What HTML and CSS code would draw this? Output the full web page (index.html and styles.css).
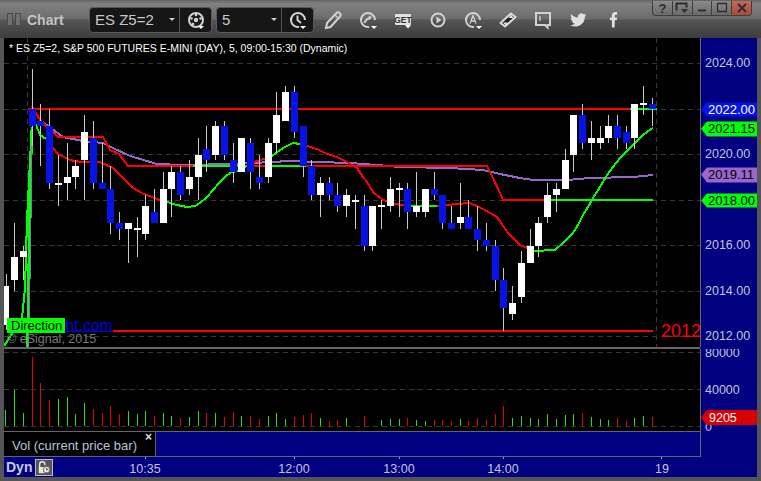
FILE: index.html
```html
<!DOCTYPE html>
<html lang="en">
<head>
<meta charset="utf-8">
<title>Chart</title>
<link rel="stylesheet" href="styles.css">
</head>
<body>
<div class="window">
  <header class="titlebar">
    <div class="handle"><i></i><i></i></div>
    <div class="title">Chart</div>
    <div class="combo combo-symbol">
      <span class="combo-text">ES Z5=2</span><span class="caret"></span>
      <span class="combo-btn">
        <svg class="ico" viewBox="0 0 24 24"><circle cx="12" cy="12" r="7" class="st2"/><circle cx="12" cy="12" r="2.200" class="fl"/><circle cx="12" cy="7" r="1.300" class="fl"/><circle cx="7.500" cy="10.500" r="1.300" class="fl"/><circle cx="16.500" cy="10.500" r="1.300" class="fl"/><circle cx="9" cy="16" r="1.300" class="fl"/><path d="M14 18h6l-3 3z" class="flw"/></svg>
      </span>
    </div>
    <div class="combo combo-interval">
      <span class="combo-text">5</span><span class="caret"></span>
      <span class="combo-btn">
        <svg class="ico" viewBox="0 0 24 24"><path d="M13 19A7 7 0 1 1 19 12" class="st2"/><path d="M11.500 7.500v4.500l3.500 3" class="st2"/><path d="M14 18h6l-3 3z" class="flw"/></svg>
      </span>
    </div>
    <div class="tools">
      <span class="tool"><svg class="ico" viewBox="0 0 24 24"><path d="M5 20l1-5L15.500 5a2 2 0 0 1 3 0l.5.500a2 2 0 0 1 0 3L9.500 19z" class="st2"/><path d="M14 7l3.500 3.500" class="st1"/></svg></span>
      <span class="tool"><svg class="ico" viewBox="0 0 24 24"><path d="M13 19A7 7 0 1 1 19 12" class="st2"/><path d="M8.500 15c.8-3 2.500-4 5-5" class="st2"/><path d="M12.500 7.500l3.500 1.500-2.500 3z" class="fl"/><path d="M15 18h6l-3 3z" class="flw"/></svg></span>
      <span class="tool"><svg class="ico" viewBox="0 0 24 24"><rect x="4" y="6" width="16" height="11" rx="1" class="fll"/><text x="12" y="15" class="get">GET</text><path d="M14 17h6l-3 3.500z" class="flw"/></svg></span>
      <span class="tool"><svg class="ico" viewBox="0 0 24 24"><circle cx="12" cy="12" r="6.500" class="st2"/><path d="M10.500 8.500l5 3.500-5 3.500z" class="fl"/></svg></span>
      <span class="tool"><svg class="ico" viewBox="0 0 24 24"><path d="M13 19A7 7 0 1 1 19 12" class="st2"/><path d="M9 15.500l3-8 3 8M10 13h4" class="st1"/><path d="M15 18h6l-3 3z" class="flw"/></svg></span>
      <span class="tool"><svg class="ico" viewBox="0 0 24 24"><path d="M4.500 15L15 5.500l4.500 3.500L9 18.500z" class="flk-st"/><path d="M7 14.500h5l-2.500 3zM12.500 10l2.500-3.500 2.500 3.500z" class="fll"/></svg></span>
      <span class="tool"><svg class="ico" viewBox="0 0 24 24"><path d="M5 5h14v12h-2.500v2.500L14 17H5z" class="st2"/><path d="M9 8v5" class="st1"/></svg></span>
      <span class="tool"><svg class="ico ico-tw" viewBox="0 0 24 24"><path d="M23 5.500c-.9.400-1.700.600-2.700.700 1-.6 1.700-1.500 2-2.600-.9.500-1.900.900-3 1.100A4.700 4.700 0 0 0 11.300 9C7.400 8.800 4 7 1.700 4.100c-1.200 2.100-.6 4.900 1.500 6.300-.8 0-1.500-.2-2.100-.6 0 2.300 1.600 4.200 3.800 4.700-.7.200-1.400.2-2.100.1.600 1.900 2.300 3.200 4.400 3.300A9.500 9.500 0 0 1 .5 19.800 13.400 13.400 0 0 0 21 7.800c.8-.6 1.500-1.400 2-2.300z" class="fll"/></svg></span>
      <span class="tool"><svg class="ico ico-fb" viewBox="0 0 24 24"><path d="M10 22v-9H7.500V9.500H10V7c0-3 1.500-4.500 4.300-4.500H16.500V6H15c-1 0-1.500.4-1.500 1.500v2h3l-.4 3.500h-2.600v9z" class="fll"/></svg></span>
    </div>
    <div class="winbtns">
      <span class="winbtn">?</span>
      <span class="winbtn"><svg class="wico" viewBox="0 0 14 12"><path d="M1.500 8.500v-7h10v4" class="wst"/><path d="M6 7h7l-3.500 4z" class="wfl"/></svg></span>
      <span class="winbtn"><svg class="wico" viewBox="0 0 14 12"><path d="M3 8.500h8" class="wst"/></svg></span>
      <span class="winbtn"><svg class="wico" viewBox="0 0 14 12"><path d="M2.500 1.500h9v8h-9z" class="wst1"/></svg></span>
      <span class="winbtn winclose"><svg class="wico" viewBox="0 0 14 12"><path d="M3 2l8 8M11 2l-8 8" class="wst"/></svg></span>
    </div>
  </header>

  <svg class="pane pane-main" viewBox="4 38 753 309">
    <rect x="4" y="38" width="696" height="309" class="bg-black"/>
    <rect x="700" y="38" width="57" height="309" class="bg-navy"/>
    <path d="M700.500 38v309" class="axis-rule"/>
    <path d="M4 63.500H700M4 109.500H700M4 154.500H700M4 200.500H700M4 245.500H700M4 291.500H700M4 336.500H700" class="grid"/>
    <path d="M27.500 38V347M656.500 38V347" class="grid"/>

    <polyline points="4,346 10,337 22,318 25,288 27,220 30,160 32,127" class="ln-green"/>
    <path d="M27.500 347L28.500 300 29.500 230 30.500 180 31.500 130" class="ln-green-thick"/>
    <path d="M28.500 347L30 280 31 220 32 146" class="ln-purple-thin"/>
    <polyline points="32,106 40,120 63,137 83,141 103,143 113,148 130,156 157,164 183,165 233,164 253,163 290,161 317,162 350,163 377,165 400,167 450,168 483,170 500,174 520,178 533,180 567,180 590,178 633,177 653,175" class="ln-purple"/>
    <polyline points="32,106 40,120 58,137 103,137 110,150 119,154 128,166 193,166" class="ln-red"/>
    <path d="M193 166H247" class="ln-green"/>
    <path d="M247 166H272" class="ln-red"/>
    <path d="M272 166H306" class="ln-green"/>
    <polyline points="306,166 487,166 492,176 500,193 503,200 550,200" class="ln-red"/>
    <path d="M550 200H653" class="ln-green"/>
    <polyline points="32,115 40,135 46,139" class="ln-green"/>
    <polyline points="46,139 53,148 58,154 70,160 80,162 100,162 113,168 123,178 133,188 142,193 157,199 167,202" class="ln-red"/>
    <polyline points="167,202 177,205 187,207 195,206 200,203 207,197 213,190 220,182 227,175 232,172 237,171 254,162" class="ln-green"/>
    <polyline points="254,162 267,158 272,156" class="ln-red"/>
    <polyline points="272,156 283,148 293,143 300,144 307,146" class="ln-green"/>
    <polyline points="307,146 317,149 327,154 337,157 347,162 352,165 357,168 363,177 367,182 373,192 380,198 390,203 407,206" class="ln-red"/>
    <path d="M407 206H437" class="ln-green"/>
    <polyline points="437,206 457,204 470,203 483,209 497,217 508,233 520,245 533,250" class="ln-red"/>
    <polyline points="533,251 555,250 563,243 573,233 578,225 583,215 588,207 593,198 600,187 607,175 613,167 620,158 628,150 635,143 642,136 648,131 653,128" class="ln-green"/>
    <path d="M28 109H630M113 331H653" class="ln-red"/>
    <path d="M630 109H657" class="ln-green"/>

    <path class="wick" d="M6.500 274V330M14.500 223V291M23.500 246V280M32.500 69V146M40.500 104V166M49.500 109V189M58.500 155V206M67.500 143V200M75.500 160V189M84.500 115V200M93.500 121V189M102.500 143V189M110.500 166V234M119.500 212V240M128.500 223V263M137.500 217V257M145.500 195V240M154.500 189V223M163.500 172V223M171.500 166V217M180.500 166V200M189.500 160V195M198.500 138V200M206.500 126V172M215.500 121V160M224.500 121V160M233.500 143V183M241.500 138V172M250.500 138V189M259.500 155V189M268.500 138V183M276.500 92V153M285.500 86V121M294.500 86V138M303.500 126V177M311.500 160V200M320.500 177V217M329.500 177V200M337.500 183V212M346.500 189V217M355.500 195V229M364.500 195V251M372.500 206V251M381.500 200V229M390.500 177V212M399.500 183V217M407.500 183V229M416.500 172V217M425.500 189V217M434.500 172V200M442.500 195V229M451.500 206V229M460.500 183V229M468.500 200V229M477.500 206V251M486.500 223V251M495.500 240V291M503.500 268V331M512.500 286V320M521.500 251V303M530.500 229V263M538.500 217V257M547.500 183V223M556.500 183V212M565.500 149V189M573.500 115V172M582.500 104V149M591.500 121V160M600.500 126V149M608.500 115V143M617.500 115V149M626.500 126V149M634.500 104V149M643.500 86V115M652.500 98V126"/>
    <path class="body-white" d="M4 286h5v39h-5zM11 257h7v23h-7zM20 251h7v6h-7zM55 183h7v2h-7zM64 177h7v6h-7zM72 166h7v11h-7zM81 132h7v28h-7zM125 223h7v6h-7zM134 228h7v2h-7zM142 206h7v28h-7zM160 189h7v34h-7zM168 172h7v17h-7zM186 177h7v12h-7zM195 155h7v22h-7zM212 126h7v29h-7zM238 138h7v34h-7zM265 143h7v34h-7zM273 115h7v28h-7zM282 92h7v29h-7zM317 183h7v12h-7zM343 195h7v11h-7zM352 200h7v2h-7zM369 206h7v40h-7zM378 205h7v2h-7zM387 189h7v17h-7zM396 188h7v2h-7zM413 206h7v6h-7zM422 189h7v23h-7zM457 217h7v6h-7zM509 303h7v11h-7zM518 263h7v34h-7zM527 246h7v17h-7zM535 223h7v23h-7zM544 195h7v22h-7zM553 189h7v6h-7zM562 160h7v29h-7zM570 115h7v40h-7zM588 138h7v5h-7zM597 138h7v5h-7zM605 126h7v12h-7zM631 104h7v34h-7zM640 103h7v2h-7z"/>
    <path class="body-blue" d="M29 109h7v17h-7zM37 121h7v5h-7zM46 126h7v57h-7zM90 138h7v45h-7zM99 183h7v6h-7zM107 189h7v34h-7zM116 223h7v6h-7zM151 212h7v11h-7zM177 172h7v23h-7zM203 149h7v11h-7zM221 126h7v29h-7zM230 160h7v12h-7zM247 143h7v29h-7zM256 177h7v6h-7zM291 92h7v40h-7zM300 126h7v40h-7zM308 166h7v29h-7zM326 183h7v12h-7zM334 195h7v11h-7zM361 206h7v40h-7zM404 189h7v23h-7zM431 189h7v6h-7zM439 195h7v28h-7zM448 223h7v6h-7zM465 217h7v12h-7zM474 229h7v11h-7zM483 240h7v6h-7zM492 246h7v34h-7zM500 280h7v28h-7zM579 115h7v28h-7zM614 126h7v12h-7zM623 132h7v11h-7zM649 104h7v5h-7z"/>

    <text x="9" y="52" class="t-header">* ES Z5=2, S&amp;P 500 FUTURES E-MINI (DAY), 5, 09:00-15:30 (Dynamic)</text>
    <text x="65.500" y="331" class="t-link">ht.com</text>
    <path d="M65 331.500H113" class="link-rule"/>
    <rect x="7" y="318" width="58" height="15" class="bg-green"/>
    <text x="11" y="330" class="t-dark">Direction</text>
    <text x="7" y="343" class="t-copy">© eSignal, 2015</text>
    <text x="661" y="337" class="t-2012">2012</text>

    <g class="t-axis">
      <text x="705" y="67">2024.00</text>
      <text x="705" y="158">2020.00</text>
      <text x="705" y="249">2016.00</text>
      <text x="705" y="295">2014.00</text>
      <text x="705" y="340">2012.00</text>
    </g>
    <path d="M701 109.500l6-7h50v14h-50z" class="tag-blue"/>
    <text x="708" y="114" class="t-tag-w">2022.00</text>
    <path d="M701 128.500l6-7h50v15h-50z" class="tag-green"/>
    <text x="708" y="133" class="t-tag-k">2021.15</text>
    <path d="M701 174.500l6-7h50v15h-50z" class="tag-purple"/>
    <text x="708" y="179" class="t-tag-k">2019.11</text>
    <path d="M701 200.500l6-7h50v14h-50z" class="tag-green"/>
    <text x="708" y="205" class="t-tag-k">2018.00</text>
  </svg>

  <div class="sep"></div>

  <svg class="pane pane-vol" viewBox="4 349 753 82">
    <rect x="4" y="349" width="696" height="82" class="bg-black"/>
    <rect x="700" y="349" width="57" height="82" class="bg-navy"/>
    <path d="M700.500 349v82" class="axis-rule"/>
    <path d="M4 352.500H700M4 389.500H700M4 426.500H700" class="grid"/>
    <path class="vol-green" d="M5.500 410V426M14.500 390V426M23.500 413V426M58.500 399V426M67.500 397V426M75.500 414V426M84.500 403V426M128.500 411V426M137.500 414V426M145.500 411V426M163.500 413V426M171.500 416V426M189.500 417V426M198.500 411V426M215.500 413V426M241.500 416V426M268.500 416V426M276.500 413V426M285.500 419V426M320.500 418V426M346.500 418V426M381.500 420V426M390.500 419V426M399.500 419V426M416.500 420V426M425.500 421V426M460.500 419V426M512.500 418V426M521.500 416V426M530.500 418V426M538.500 419V426M547.500 414V426M556.500 419V426M565.500 415V426M573.500 414V426M591.500 417V426M600.500 419V426M608.500 420V426M634.500 418V426M643.500 416V426"/>
    <path class="vol-red" d="M32.500 357V426M40.500 383V426M49.500 400V426M93.500 409V426M102.500 413V426M110.500 406V426M119.500 414V426M154.500 416V426M180.500 418V426M206.500 413V426M224.500 417V426M233.500 412V426M250.500 416V426M259.500 419V426M294.500 417V426M303.500 415V426M311.500 413V426M329.500 421V426M337.500 420V426M364.500 416V426M407.500 418V426M434.500 420V426M442.500 420V426M451.500 421V426M468.500 421V426M477.500 418V426M486.500 420V426M495.500 414V426M503.500 406V426M582.500 413V426M617.500 418V426M626.500 421V426M652.500 417V426"/>
    <g class="t-axis">
      <text x="705" y="394">40000</text>
      <text x="705" y="431">0</text>
      <text x="705" y="357">80000</text>
    </g>
    <path d="M701 417.500l6-7.500h50v15h-50z" class="tag-red"/>
    <text x="709" y="422" class="t-tag-v">9205</text>
  </svg>

  <div class="legend-row">
    <div class="legend">
      <span class="legend-text">Vol (current price bar)</span>
      <span class="legend-x">×</span>
    </div>
    <div class="legend-fill"></div>
    <div class="legend-axis"></div>
  </div>

  <div class="timebar">
    <span class="dyn">Dyn</span>
    <span class="lock"><svg class="lock-ico" viewBox="0 0 16 16"><path d="M3 8V5a3 3 0 0 1 6 0v1" class="lk-st"/><rect x="2" y="8" width="8" height="7" class="lk-fl"/><circle cx="11" cy="11" r="3.800" class="lk-fl2"/><path d="M11 9v2h2" class="lk-st2"/></svg></span>
    <svg class="time-svg" viewBox="0 0 704 20">
      <path d="M92.500 0v2M241.500 0v2M346.500 0v2M450.500 0v2M608.500 0v2" class="tick"/>
      <g class="t-time">
        <text x="92" y="16">10:35</text>
        <text x="241" y="16">12:00</text>
        <text x="346" y="16">13:00</text>
        <text x="450" y="16">14:00</text>
        <text x="609" y="16">19</text>
      </g>
    </svg>
  </div>
</div>
</body>
</html>
```
FILE: styles.css
```css
* { box-sizing: border-box; }
html, body { margin: 0; padding: 0; background: #555; }
body { width: 761px; height: 481px; overflow: hidden; font-family: "Liberation Sans", Arial, sans-serif; }
.window { width: 761px; height: 481px; display: flex; flex-direction: column; background: #555; padding: 0 4px 4px 4px; }

/* Title bar */
.titlebar { height: 38px; margin: 0 -4px; display: flex; align-items: center; flex: none; background: linear-gradient(#6f6f6f 0, #808080 3px, #6b6b6b 18px, #555 19px, #3c3c3c 37px); border-top: 1px solid #666; padding-left: 7px; }
.handle { display: flex; gap: 2px; width: 14px; flex: none; }
.handle i { width: 6px; height: 13px; border: 1px solid #4a4a4a; background: #707070; }
.title { margin-left: 6px; width: 62px; font-size: 14px; font-weight: bold; color: #c4c4c4; flex: none; }
.combo { height: 26px; display: flex; align-items: center; flex: none; background: #161616; border: 1px solid #5a5a5a; border-radius: 4px; color: #c8c8c8; font-size: 15px; }
.combo-symbol { width: 123px; }
.combo-interval { width: 98px; margin-left: 4px; }
.combo-text { padding-left: 5px; flex: 1; }
.caret { width: 0; height: 0; border: 3px solid transparent; border-top: 3px solid #ccc; border-bottom: 0; margin-right: 4px; }
.combo-btn { width: 32px; height: 24px; border-left: 1px solid #555; display: flex; align-items: center; justify-content: center; }
.tools { display: flex; margin-left: 1.500px; flex: none; }
.tool { width: 35px; height: 24px; display: flex; align-items: center; justify-content: center; }
.ico { width: 24px; height: 24px; display: block; }
.ico-tw { width: 17px; height: 17px; }
.ico-fb { width: 19px; height: 19px; }
.st2 { fill: none; stroke: #d2d2d2; stroke-width: 2; }
.st1 { fill: none; stroke: #d2d2d2; stroke-width: 1.300; }
.fl { fill: #d2d2d2; }
.fll { fill: #e0e0e0; }
.flw { fill: #fff; }
.flk-st { fill: #222; stroke: #dcdcdc; stroke-width: 2; stroke-linejoin: round; }
.get { font-family: "Liberation Sans", sans-serif; font-size: 8.500px; font-weight: bold; text-anchor: middle; fill: #333; }

.winbtns { margin-left: auto; margin-right: 9px; align-self: flex-start; display: flex; height: 15px; border: 1px solid #3e3e3e; border-top: 0; border-radius: 0 0 4px 4px; overflow: hidden; width: 100px; flex: none; background: linear-gradient(#8a8a8a, #6a6a6a); }
.winbtn { flex: 1; display: flex; align-items: center; justify-content: center; border-left: 1px solid #3e3e3e; font-size: 13px; font-weight: bold; color: #2e2e2e; }
.winbtn:first-child { border-left: 0; }
.winclose { background: linear-gradient(#c8685a, #a84a3c); }
.wico { width: 14px; height: 12px; display: block; }
.wst { fill: none; stroke: #2e2e2e; stroke-width: 2; }
.wst1 { fill: none; stroke: #2e2e2e; stroke-width: 1.300; }
.wfl { fill: #2e2e2e; }

/* Panes */
.pane { display: block; flex: none; width: 753px; }
.pane-main { height: 309px; }
.pane-vol { height: 82px; }
.sep { height: 2px; flex: none; background: linear-gradient(90deg, #666 0, #666 696px, #000080 696px); }
.bg-black { fill: #000; }
.bg-navy { fill: #000080; }
.bg-green { fill: #00ff00; }
.axis-rule { fill: none; stroke: #666; stroke-width: 1; }
.grid { fill: none; stroke: #383838; stroke-width: 1; stroke-dasharray: 5 4; }

polyline, .ln-green, .ln-red, .ln-green-thick, .ln-purple, .ln-purple-thin { fill: none; shape-rendering: crispEdges; }
.ln-green { stroke: #00ff00; stroke-width: 2; }
.ln-green-thick { stroke: #00ff00; stroke-width: 3; }
.ln-red { stroke: #ff0000; stroke-width: 2; }
.ln-purple { stroke: #9966cc; stroke-width: 2; }
.ln-purple-thin { stroke: #9966cc; stroke-width: 1; }
.wick { fill: none; stroke: #c8c8c8; stroke-width: 1; }
.body-white { fill: #fff; }
.body-blue { fill: #0613e6; }

.t-header { font-size: 10.500px; fill: #fff; }
.t-link { font-size: 15.700px; fill: #0000e0; }
.link-rule { stroke: #0000e0; stroke-width: 1; }
.t-dark { font-size: 13px; fill: #000; }
.t-copy { font-size: 12.500px; fill: #7a7a7a; }
.t-2012 { font-size: 18px; fill: #f00; }
.t-axis text { font-size: 12.500px; fill: #c4c4dc; }
.t-tag-w { font-size: 13px; fill: #fff; }
.t-tag-k { font-size: 13px; fill: #000; }
.t-tag-v { font-size: 12.500px; fill: #fff; }
.tag-blue { fill: #0613e6; }
.tag-green { fill: #00ff00; }
.tag-purple { fill: #9966cc; }
.tag-red { fill: #d80000; }
.vol-green { fill: none; stroke: #33dd00; stroke-width: 1; }
.vol-red { fill: none; stroke: #e60000; stroke-width: 1; }

/* Legend row */
.legend-row { height: 26px; flex: none; display: flex; background: #000080; border-top: 1px solid #666; border-bottom: 1px solid #666; }
.legend { width: 151px; flex: none; background: #000; display: flex; position: relative; font-size: 13px; color: #b8c4d8; align-items: center; padding: 3px 0 0 8px; }
.legend-text { white-space: nowrap; }
.legend-x { position: absolute; right: 3px; top: -3px; color: #ddd; font-size: 12px; font-weight: bold; line-height: 16px; }
.legend-fill { width: 545px; flex: none; border-left: 1px solid #666; }
.legend-axis { flex: 1; border-left: 1px solid #666; margin-top: -1px; margin-bottom: -1px; background: #000080; }

/* Time axis */
.timebar { height: 20px; flex: none; display: flex; align-items: center; background: #000080; position: relative; }
.dyn { width: 31px; padding-left: 2px; font-size: 14px; font-weight: bold; color: #c8c8e4; flex: none; }
.lock { width: 18px; height: 17px; border: 1px solid #bbb; background: #555; flex: none; display: flex; align-items: center; justify-content: center; }
.lock-ico { width: 14px; height: 14px; display: block; }
.lk-st { fill: none; stroke: #e8e8e8; stroke-width: 1.500; }
.lk-fl { fill: #e8e8e8; }
.lk-fl2 { fill: #e8e8e8; stroke: #555; stroke-width: 1; }
.lk-st2 { fill: none; stroke: #333; stroke-width: 1; }
.time-svg { width: 704px; height: 20px; flex: none; display: block; }
.tick { fill: none; stroke: #999; stroke-width: 1; }
.t-time text { font-size: 12.500px; fill: #c4c4dc; text-anchor: middle; }
```
